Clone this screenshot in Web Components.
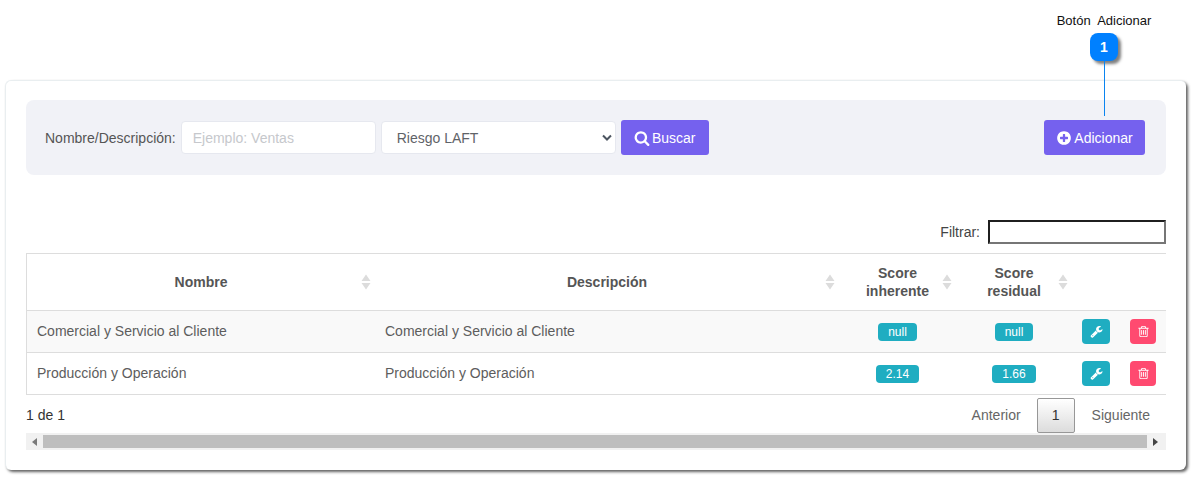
<!DOCTYPE html>
<html lang="es">
<head>
<meta charset="utf-8">
<title>Adicionar</title>
<style>
  html, body { margin: 0; background: #fff; }
  body { font-family: "Liberation Sans", Arial, sans-serif; font-size: 14px; color: #555; }
</style>
</head>
<body>
<risk-page>
  <risk-callout slot="callout" label="Botón  Adicionar" num="1"></risk-callout>
  <risk-toolbar></risk-toolbar>
  <risk-table></risk-table>
</risk-page>

<script>
// font awesome 4 outlines, 1792 grid
const ICONS = {
  search: "M1216 832q0-185-131.5-316.5t-316.5-131.5-316.5 131.5-131.5 316.5 131.5 316.5 316.5 131.5 316.5-131.5 131.5-316.5zm512 832q0 52-38 90t-90 38q-54 0-90-38l-343-342q-179 124-399 124-143 0-273.5-55.5t-225-150-150-225-55.5-273.5 55.5-273.5 150-225 225-150 273.5-55.5 273.5 55.5 225 150 150 225 55.5 273.5q0 220-124 399l343 343q37 37 37 90z",
  plus: "M1344 960v-128q0-26-19-45t-45-19h-256v-256q0-26-19-45t-45-19h-128q-26 0-45 19t-19 45v256h-256q-26 0-45 19t-19 45v128q0 26 19 45t45 19h256v256q0 26 19 45t45 19h128q26 0 45-19t19-45v-256h256q26 0 45-19t19-45zm320-64q0 209-103 385.5t-279.5 279.5-385.5 103-385.5-103-279.5-279.5-103-385.5 103-385.5 279.5-279.5 385.5-103 385.5 103 279.5 279.5 103 385.5z",
  wrench: "M448 1472q0-26-19-45t-45-19-45 19-19 45 19 45 45 19 45-19 19-45zm644-420l-682 682q-37 37-90 37-52 0-91-37l-106-108q-38-36-38-90 0-53 38-91l681-681q39 98 114.5 173.5t173.5 114.5zm634-435q0 39-23 106-47 134-164.5 217.5t-258.5 83.5q-185 0-316.5-131.5t-131.5-316.5 131.5-316.5 316.5-131.5q58 0 121.5 16.5t107.5 46.5q16 11 16 28t-16 28l-293 169v224l193 107q5-3 79-48.5t135.5-81 70.5-35.5q15 0 23.5 10t8.5 25z",
  trash: "M704 736v576q0 14-9 23t-23 9h-64q-14 0-23-9t-9-23v-576q0-14 9-23t23-9h64q14 0 23 9t9 23zm256 0v576q0 14-9 23t-23 9h-64q-14 0-23-9t-9-23v-576q0-14 9-23t23-9h64q14 0 23 9t9 23zm256 0v576q0 14-9 23t-23 9h-64q-14 0-23-9t-9-23v-576q0-14 9-23t23-9h64q14 0 23 9t9 23zm128 724v-948h-896v948q0 22 7 40.5t14.5 27 10.5 8.5h832q3 0 10.5-8.5t14.5-27 7-40.5zm-672-1076h448l-48-117q-7-9-17-11h-317q-10 2-17 11zm928 32v64q0 14-9 23t-23 9h-96v948q0 83-47 143.5t-113 60.5h-832q-66 0-113-58.5t-47-141.5v-952h-96q-14 0-23-9t-9-23v-64q0-14 9-23t23-9h309l70-167q15-37 54-63t79-26h320q40 0 79 26t54 63l70 167h309q14 0 23 9t9 23z"
};
const icon = (name, size) =>
  `<svg width="${size}" height="${size}" viewBox="0 0 1792 1792" fill="currentColor" aria-hidden="true"><path d="${ICONS[name]}"/></svg>`;

// PAGE - white card holding everything, callout floats above it
class RiskPage extends HTMLElement {
  constructor() {
    super();
    this.attachShadow({ mode: "open" }).innerHTML = `
    <style>
      :host { display: block; position: relative; height: 479px; padding-top: 80px; box-sizing: border-box; overflow: hidden; }
      #card {
        margin-left: 5px; width: 1181px; height: 390px; box-sizing: border-box;
        padding: 19px 20px 0 20px;
        background: #fff;
        border: 1px solid #e9eef0; border-right: 0; border-bottom: 0;
        border-radius: 6px;
        box-shadow: 2px 2px 3px rgba(0,0,0,.62);
      }
    </style>
    <slot name="callout"></slot>
    <div id="card"><slot></slot></div>`;
  }
}

// CALLOUT - numbered marker with its label and leader line
class RiskCallout extends HTMLElement {
  constructor() {
    super();
    this.attachShadow({ mode: "open" }).innerHTML = `
    <style>
      :host { display: block; position: absolute; left: 1044px; top: 13px; width: 120px; z-index: 2; text-align: center; }
      #label { font-size: 13px; line-height: 15px; color: #111; white-space: pre; }
      #dot {
        width: 28px; height: 28px; margin: 5px auto 0; border-radius: 8px;
        background: #0080ff; color: #fff; font-weight: bold; font-size: 14px; line-height: 28px;
        box-shadow: 3px 3px 3px rgba(0,0,0,.5);
      }
      #line { width: 1px; height: 55px; margin: 0 auto; background: #0a84f0; }
    </style>
    <div id="label"></div>
    <div id="dot"></div>
    <div id="line"></div>`;
  }
  connectedCallback() {
    this.shadowRoot.querySelector("#label").textContent = this.getAttribute("label");
    this.shadowRoot.querySelector("#dot").textContent = this.getAttribute("num");
  }
}

// PURPLE BUTTON
class RiskButton extends HTMLElement {
  constructor() {
    super();
    this.attachShadow({ mode: "open" }).innerHTML = `
    <style>
      :host {
        display: inline-flex; align-items: center; justify-content: center; gap: 2px;
        height: 35px; box-sizing: border-box;
        background: #7561ee; color: #fff; border-radius: 3px; font-size: 14px;
      }
      svg { display: block; }
    </style>
    <span id="ic"></span><slot></slot>`;
  }
  connectedCallback() {
    this.shadowRoot.querySelector("#ic").innerHTML = icon(this.getAttribute("icon"), 16);
    this.shadowRoot.querySelector("#ic").style.display = "block";
  }
}
customElements.define("risk-button", RiskButton);

// SEARCH BAR
class RiskToolbar extends HTMLElement {
  constructor() {
    super();
    this.attachShadow({ mode: "open" }).innerHTML = `
    <style>
      :host { display: flex; align-items: center; height: 75px; box-sizing: border-box; padding: 0 21px 0 19px; background: #f1f2f7; border-radius: 8px; }
      label { color: #555; margin-right: 5px; white-space: nowrap; }
      #txt, #sel {
        height: 33px; box-sizing: border-box; background: #fff; border: 1px solid #e6e8ef; border-radius: 4px;
        font: 14px "Liberation Sans", Arial, sans-serif; display: flex; align-items: center;
      }
      #txt { width: 195px; padding-left: 11px; margin-right: 5px; color: #c6c8cc; }
      #sel { width: 235px; padding: 0 0 0 15px; margin-right: 5px; color: #5f6368; justify-content: space-between; }
      #sel svg { margin-right: 3px; }
      .b1 { width: 88px; }
      .b2 { width: 101px; margin-left: auto; }
    </style>
    <label>Nombre/Descripción:</label>
    <div id="txt">Ejemplo: Ventas</div>
    <div id="sel"><span>Riesgo LAFT</span>
      <svg width="10" height="8" viewBox="0 0 10 8"><path d="M1 1.5 5 5.5 9 1.5" fill="none" stroke="#4c5560" stroke-width="2"/></svg>
    </div>
    <risk-button class="b1" icon="search">Buscar</risk-button>
    <risk-button class="b2" icon="plus">Adicionar</risk-button>`;
  }
}

// SORTABLE TABLE WITH FILTER, PAGER AND SCROLLBAR
const ROWS = [
  ["Comercial y Servicio al Cliente", "Comercial y Servicio al Cliente", "null", "null"],
  ["Producción y Operación", "Producción y Operación", "2.14", "1.66"]
];
const sortArrows = `<svg class="sort" width="10" height="16" viewBox="0 0 10 16"><path d="M5 0.5 9.5 7H.5zM.5 9h9L5 15.5z" fill="#dcdcdc"/></svg>`;
const head = (html) => `<th><div class="h"><span></span><span>${html}</span>${sortArrows}</div></th>`;

class RiskTable extends HTMLElement {
  constructor() {
    super();
    const body = ROWS.map((r, i) => `
      <tr class="${i % 2 ? "" : "odd"}">
        <td class="t">${r[0]}</td><td class="t">${r[1]}</td>
        <td class="c"><span class="pill">${r[2]}</span></td>
        <td class="c"><span class="pill">${r[3]}</span></td>
        <td class="acts"><div class="btns">
          <span class="act tool">${icon("wrench", 13)}</span>
          <span class="act del">${icon("trash", 13)}</span>
        </div></td>
      </tr>`).join("");
    this.attachShadow({ mode: "open" }).innerHTML = `
    <style>
      :host { display: block; }
      #filter { display: flex; justify-content: flex-end; align-items: center; gap: 8px; margin-top: 45px; height: 24px; color: #444; }
      #filter input { width: 178px; height: 24px; box-sizing: border-box; margin: 0; padding: 0; background: #fff;
        border: 2px solid; border-color: #1f1f1f #767676 #767676 #1f1f1f; border-radius: 0; }
      #wrap { margin-top: 9px; width: 1140px; overflow: hidden; border-left: 1px solid #ddd; box-sizing: border-box; }
      table { border-collapse: separate; border-spacing: 0; table-layout: fixed; width: 1140px; font-size: 14px; color: #5d5d5d; }
      th { height: 58px; box-sizing: border-box; padding: 0; font-weight: bold; color: #555; line-height: 18px;
        border-top: 1px solid #ddd; border-bottom: 1px solid #ddd; }
      .h { display: grid; grid-template-columns: 14px 1fr 14px; align-items: center; text-align: center; }
      .sort { display: block; }
      td { height: 42px; box-sizing: border-box; padding: 0 10px; border-bottom: 1px solid #ddd; white-space: nowrap; }
      td.t { padding-bottom: 2px; }
      tr.odd td { background: #f9f9f9; }
      .c { text-align: center; padding: 0; }
      .pill { display: inline-block; height: 18px; line-height: 18px; padding: 0 10px; background: #1fadc1; color: #fff; border-radius: 4px; font-size: 12px; vertical-align: middle; }
      .acts { padding: 0 0 0 10px; }
      .btns { display: flex; gap: 20px; }
      .act { display: flex; align-items: center; justify-content: center; height: 25px; border-radius: 4px; color: #fff; }
      .tool { width: 28px; background: #1fadc1; }
      .del { width: 26px; background: #ff4a70; }
      #pager { display: flex; align-items: flex-start; height: 38px; box-sizing: border-box; padding-top: 3px; color: #333; }
      #pager .of { line-height: 35px; }
      #pager .nav { line-height: 35px; padding: 0 16px; color: #666; }
      #pager .nav.first { margin-left: auto; }
      #pager .cur { width: 38px; height: 35px; line-height: 33px; box-sizing: border-box; text-align: center; color: #333;
        border: 1px solid #979797; border-radius: 2px; background: linear-gradient(#fff, #dcdcdc); }
      #pager .last { padding-left: 17px; }
      #bar { display: flex; height: 17px; background: #f1f1f1; align-items: center; }
      #bar .end { width: 17px; height: 17px; display: flex; align-items: center; justify-content: center; flex: none; }
      #bar .thumb { flex: none; width: 1104px; height: 13px; background: #bebebe; }
    </style>
    <div id="filter"><span>Filtrar:</span><input type="text"></div>
    <div id="wrap">
      <table>
        <colgroup><col style="width:348px"><col style="width:464px"><col style="width:117px"><col style="width:116px"><col style="width:95px"></colgroup>
        <thead><tr>
          ${head("Nombre")}${head("Descripción")}${head("Score<br>inherente")}${head("Score<br>residual")}
          <th></th>
        </tr></thead>
        <tbody>${body}</tbody>
      </table>
    </div>
    <div id="pager">
      <span class="of">1 de 1</span>
      <span class="nav first">Anterior</span>
      <span class="cur">1</span>
      <span class="nav last">Siguiente</span>
    </div>
    <div id="bar">
      <span class="end"><svg width="5" height="8" viewBox="0 0 5 8"><path d="M5 0V8L0 4z" fill="#7a7a7a"/></svg></span>
      <span class="thumb"></span>
      <span class="end"><svg width="5" height="8" viewBox="0 0 5 8"><path d="M0 0V8L5 4z" fill="#444"/></svg></span>
    </div>`;
  }
}

customElements.define("risk-callout", RiskCallout);
customElements.define("risk-toolbar", RiskToolbar);
customElements.define("risk-table", RiskTable);
customElements.define("risk-page", RiskPage);
</script>
</body>
</html>
